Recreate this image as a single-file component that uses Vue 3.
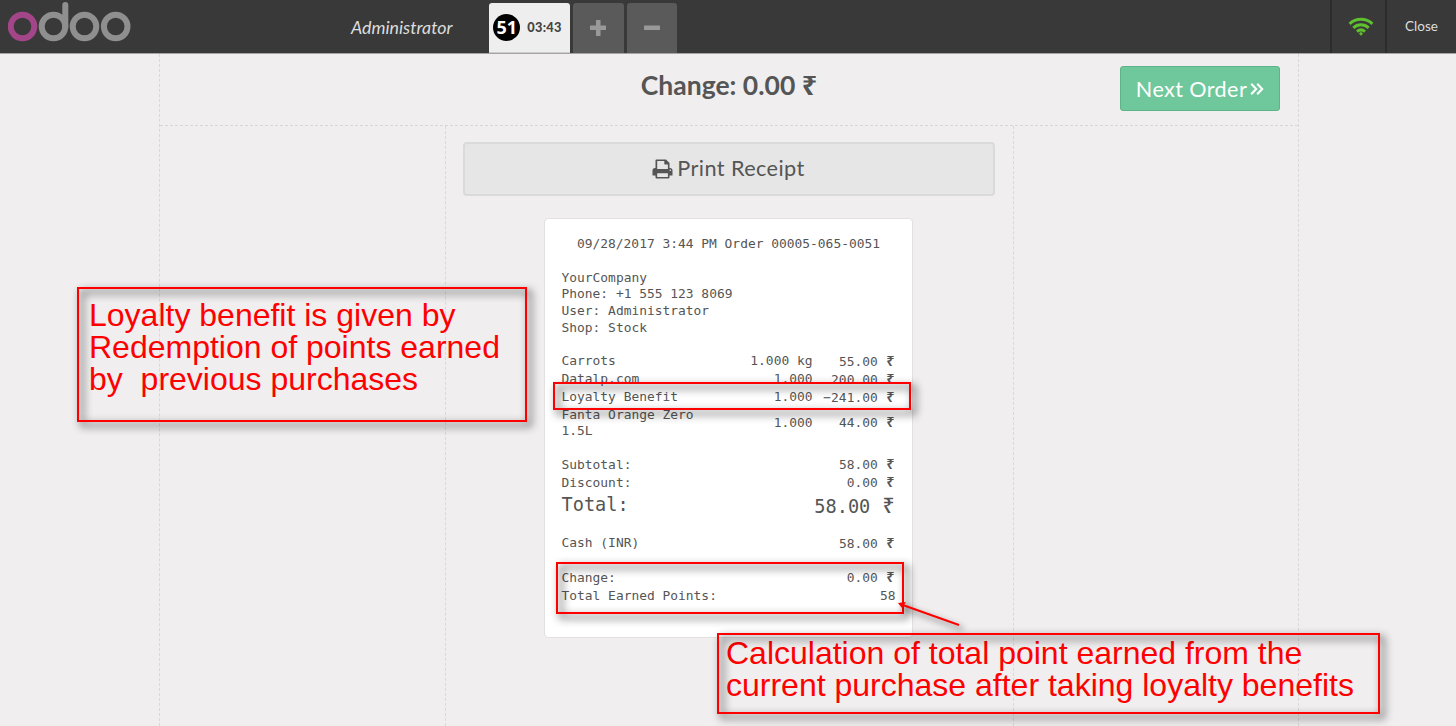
<script setup>
const company = ['YourCompany', 'Phone: +1 555 123 8069', 'User: Administrator', 'Shop: Stock']
const lines = [
  { name: 'Carrots', qty: '1.000 kg', price: '55.00' },
  { name: 'Datalp.com', qty: '1.000', price: '200.00' },
  { name: 'Loyalty Benefit', qty: '1.000', price: '−241.00' },
  { name: 'Fanta Orange Zero 1.5L', qty: '1.000', price: '44.00', tall: true },
]
const benefitNote = 'Loyalty benefit is given by\nRedemption of points earned\nby  previous purchases'
const earnedNote = 'Calculation of total point earned from the\ncurrent purchase after taking loyalty benefits'
</script>

<template>
  <div class="pos">
    <header class="topbar">
      <svg class="logo" width="124" height="40" viewBox="0 0 124 40" fill="none" stroke-width="6">
        <g stroke="#8f8f8f">
          <circle cx="45.5" cy="24.5" r="11.8" />
          <path d="M57.3 24.5V3" stroke-linecap="round" />
          <circle cx="76.5" cy="24.5" r="11.8" />
          <circle cx="107.7" cy="24.5" r="11.8" />
        </g>
        <circle cx="14.5" cy="24.5" r="11.8" stroke="#a24689" />
      </svg>
      <span class="user">Administrator</span>
      <div class="tabs">
        <div class="tab active"><span class="num">51</span><span class="time">03:43</span></div>
        <div class="tab sq">
          <svg width="16" height="16" viewBox="0 0 16 16"><path d="M6.500 0h3.500q.5 0 .5.500V5.500H15.500q.5 0 .5.500V9.500q0 .5-.5.500H10.500v5.500q0 .5-.5.500H6.500q-.5 0-.5-.5V10H.5Q0 10 0 9.500V6q0-.5.500-.5H6V.5Q6 0 6.500 0z" /></svg>
        </div>
        <div class="tab sq">
          <svg width="16" height="16" viewBox="0 0 16 16"><rect y="5.500" width="16" height="4.500" rx=".6" /></svg>
        </div>
      </div>
      <div class="wifi">
        <svg width="26" height="20" viewBox="0 0 26 20" fill="none" stroke="#5fbf2f" stroke-width="3">
          <path d="M1.6 6.8C8 .8 18 .8 24.4 6.8" />
          <path d="M5.3 10.8C9.7 6.7 16.3 6.7 20.7 10.8" />
          <path d="M9 14.6c2.4-2.1 5.600-2.100 8 0" />
          <path d="M13 14.800l2 2-2 2-2-2z" fill="#5fbf2f" stroke="none" />
        </svg>
      </div>
      <div class="close">Close</div>
    </header>

    <main class="screen">
      <div class="head">
        <h1>Change: 0.00 <span class="rs">₹</span></h1>
        <button class="next"><span>Next Order</span>
          <svg width="14" height="14" viewBox="0 0 14 14" fill="none" stroke="#fff" stroke-width="2.100"><path d="M1.200 1.700l5 5.300-5 5.300M7.200 1.700l5 5.300-5 5.300" /></svg>
        </button>
      </div>
      <div class="cols">
        <aside></aside>
        <section>
          <button class="print">
            <svg width="21" height="20" viewBox="0 0 21 20"><path fill="#555" fill-rule="evenodd" d="M3.500 9V1.500Q3.500.5 4.500.5H14L17.500 4V9H18Q20.500 9 20.500 11.500V16Q20.500 16.500 20 16.500H17.500V18.500Q17.500 19.500 16.500 19.500H4.500Q3.500 19.500 3.500 18.500V16.500H1Q.5 16.500.5 16V11.500Q.5 9 3 9ZM5.200 2V10H15.900V5.500H13Q12.300 5.500 12.300 4.800V2ZM5.200 14.300V18H15.900V14.300Z" /><circle cx="18.300" cy="11.300" r=".8" fill="#e6e6e6" /></svg>
            <span>Print Receipt</span>
          </button>
          <div class="receipt">
            <div class="title">09/28/2017 3:44 PM Order 00005-065-0051</div>
            <div class="company"><div v-for="c in company" :key="c">{{ c }}</div></div>
            <div class="lines">
              <div v-for="l in lines" :key="l.name" class="line" :class="{ tall: l.tall }">
                <span class="name">{{ l.name }}</span><span class="qty">{{ l.qty }}</span>
                <span class="amt">{{ l.price }} <i class="rs">₹</i></span>
              </div>
            </div>
            <div class="sum"><span>Subtotal:</span><span class="amt">58.00 <i class="rs">₹</i></span></div>
            <div class="sum"><span>Discount:</span><span class="amt">0.00 <i class="rs">₹</i></span></div>
            <div class="sum total"><span>Total:</span><span class="amt">58.00 <i class="rs">₹</i></span></div>
            <div class="sum cash"><span>Cash (INR)</span><span class="amt">58.00 <i class="rs">₹</i></span></div>
            <div class="sum"><span>Change:</span><span class="amt">0.00 <i class="rs">₹</i></span></div>
            <div class="sum"><span>Total Earned Points:</span><span>58</span></div>
          </div>
        </section>
        <aside></aside>
      </div>
    </main>

    <div class="note benefit">{{ benefitNote }}</div>
    <div class="note row-mark"></div>
    <div class="note points-mark"></div>
    <svg class="arrow" width="80" height="45" viewBox="0 0 80 45">
      <path d="M5 8L64 29" stroke="#f00" stroke-width="2" fill="none" />
      <path d="M3 7l8-1-4 6z" fill="#f00" />
    </svg>
    <div class="note earned">{{ earnedNote }}</div>
  </div>
</template>

<style>
body { margin: 0; overflow: hidden; }
</style>

<style scoped>
* { box-sizing: border-box; }
.pos { position: relative; width: 1456px; height: 726px; overflow: hidden; background: #f0eeee; color: #555; font-family: Lato, "DejaVu Sans", sans-serif; }
.topbar { display: flex; height: 54px; background: #393939; border-bottom: 1px solid #a5a5a5; }
.logo { margin: 2px 0 0 8px; flex: none; }
.user { width: 357px; padding-left: 219px; line-height: 54px; font-size: 17.800px; font-style: italic; color: #ddd; white-space: nowrap; }
.tabs { display: flex; gap: 3px; padding-top: 3px; flex: 1; }
.tab { height: 50px; border-radius: 3px 3px 0 0; display: flex; align-items: center; justify-content: center; background: #5a5a5a; }
.tab.sq { width: 50.500px; }
.tab svg { fill: #999; }
.active { width: 81px; background: #eee; color: #444; border-bottom: 1px solid #ccc; gap: 7px; padding-right: 4px; }
.num { width: 27px; height: 27px; flex: none; border-radius: 50%; background: #000; color: #fff; font: 700 18px/27px "Open Sans", sans-serif; text-align: center; }
.time { font-size: 12.800px; letter-spacing: .3px; font-weight: 900; position: relative; top: -1px; }
.wifi { width: 55px; border-left: 2px solid #2c2c2c; display: flex; align-items: center; justify-content: center; padding-left: 5px; }
.close { width: 71px; border-left: 2px solid #2c2c2c; line-height: 53px; text-align: center; font-size: 13.500px; color: #ddd; }
.screen { width: 1140px; height: 672px; margin-left: 159px; border: dashed #d9d7d7; border-width: 0 1px; display: flex; flex-direction: column; }
.head { height: 72px; border-bottom: 1px dashed #d8d6d6; display: grid; grid-template-columns: 1fr auto 1fr; align-items: start; }
h1 { grid-column: 2; margin: 14px 0 0; font-size: 26.500px; line-height: 34px; font-weight: 700; white-space: nowrap; }
button { font-family: inherit; padding: 0; display: flex; align-items: center; justify-content: center; }
.next { grid-column: 3; justify-self: end; margin: 12px 18px 0 0; width: 160px; height: 45px; border: 1px solid #5eb389; border-radius: 3px; background: #6ec89b; color: #fff; font-size: 21.600px; letter-spacing: .4px; gap: 3px; white-space: nowrap; }
.next span { position: relative; top: 0; }
.print span { position: relative; top: -1px; }
.cols { flex: 1; display: grid; grid-template-columns: 285px 569px 1fr; }
section { border: dashed #d9d7d7; border-width: 0 1px; display: flex; flex-direction: column; align-items: center; padding: 16px 2px 0 0; }
.print { width: 532px; height: 54px; border: 2px solid #dadada; border-radius: 4px; background: #e6e6e6; color: #555; font-size: 21.700px; letter-spacing: .4px; gap: 4px; }
.receipt { width: 369px; height: 420px; margin-top: 22px; padding: 17px 16.500px 0 16.500px; border: 1px solid #e2e0e0; border-radius: 4px; background: #fff; font: 12.920px/16.700px "DejaVu Sans Mono", monospace; white-space: nowrap; }
.title { text-align: center; }
.company { margin: 17px 0 16.400px; }
.line { display: grid; grid-template-columns: 150px 101px 1fr; height: 17.800px; align-items: center; }
.line.tall { height: 34px; }
.name { white-space: normal; }
.qty { text-align: right; }
.amt { text-align: right; position: relative; left: -1px; }
.rs { font-style: normal; font-family: "Noto Sans", "DejaVu Sans", sans-serif; }
h1 .rs { font-size: 27px; }
.receipt .rs { font-size: 14.500px; line-height: 14px; font-weight: 600; display: inline-block; width: 9px; text-align: right; }
.lines { margin-bottom: 16px; }
.sum { display: flex; justify-content: space-between; align-items: center; height: 17.800px; }
.total { height: 27px; font-size: 18.600px; }
.receipt .total .rs { width: 13px; font-size: 21px; line-height: 18px; font-weight: 500; }
.cash { margin: 16px 0 16.500px; }
.note { position: absolute; color: #f00; font: 32px/32px "Liberation Sans", Arial, sans-serif; white-space: pre; }
.note::before { content: ""; position: absolute; inset: 0; border: 2px solid #f00; filter: drop-shadow(4px 4px 4px rgba(0, 0, 0, .95)); }
.benefit { left: 77px; top: 287px; width: 450px; height: 135px; padding: 12px; }
.row-mark { left: 553px; top: 382px; width: 358px; height: 28px; }
.points-mark { left: 556px; top: 562px; width: 348px; height: 52px; }
.earned { left: 717px; top: 633px; width: 663px; height: 81px; padding: 4px 9px; }
.arrow { position: absolute; left: 895px; top: 596px; filter: drop-shadow(4px 4px 3px rgba(0, 0, 0, .6)); }
</style>
